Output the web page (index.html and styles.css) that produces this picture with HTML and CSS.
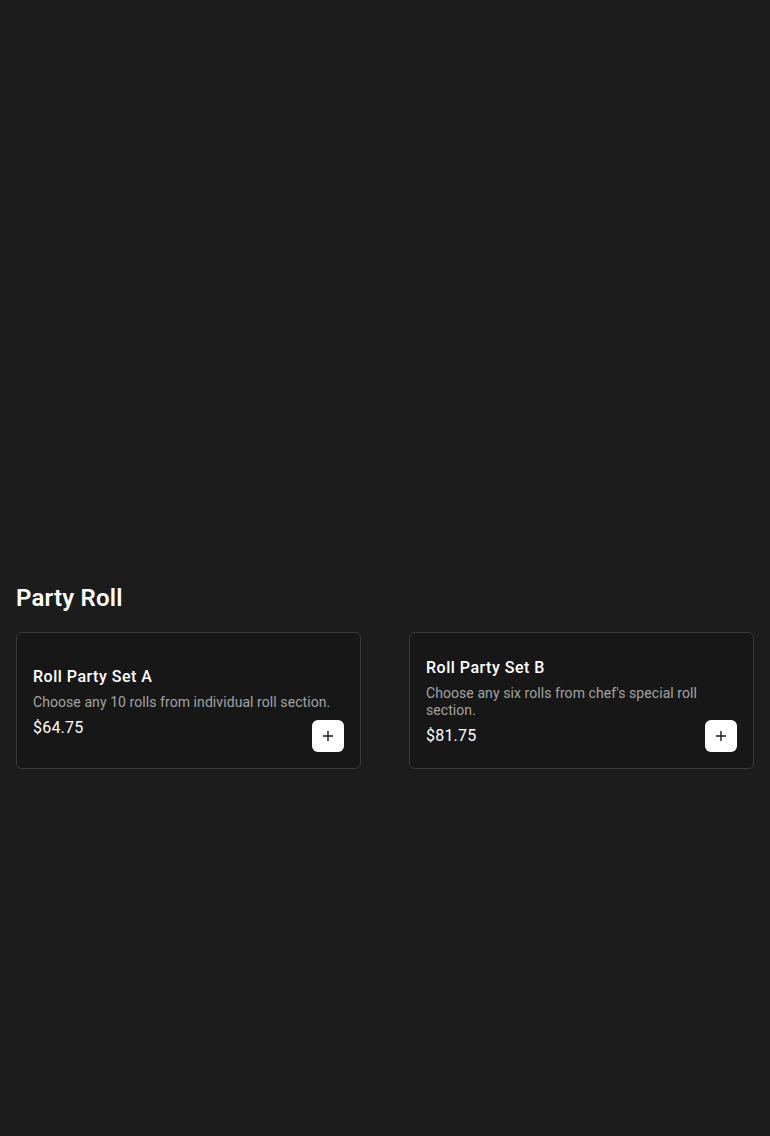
FILE: index.html
```html
<!DOCTYPE html>
<html lang="en">
<head>
<meta charset="utf-8">
<title>Party Roll</title>
<link rel="stylesheet" href="styles.css">
</head>
<body>
<main class="page">
  <div class="hero"></div>
  <section class="category">
    <h2 class="category-title">Party Roll</h2>
    <div class="grid">
      <article class="card">
        <div class="card-body">
          <h3 class="item-name">Roll Party Set A</h3>
          <p class="item-desc">Choose any 10 rolls from individual roll section.</p>
          <p class="item-price">$64.75</p>
        </div>
        <button class="add-btn" aria-label="Add">
          <svg width="12" height="12" viewBox="0 0 12 12"><path d="M6 1.5v9M1.5 6h9" stroke="#1c1c1c" stroke-width="1.4" fill="none" stroke-linecap="round"/></svg>
        </button>
      </article>
      <article class="card">
        <div class="card-body">
          <h3 class="item-name">Roll Party Set B</h3>
          <p class="item-desc">Choose any six rolls from chef's special roll section.</p>
          <p class="item-price">$81.75</p>
        </div>
        <button class="add-btn" aria-label="Add">
          <svg width="12" height="12" viewBox="0 0 12 12"><path d="M6 1.5v9M1.5 6h9" stroke="#1c1c1c" stroke-width="1.4" fill="none" stroke-linecap="round"/></svg>
        </button>
      </article>
    </div>
  </section>
</main>
</body>
</html>
```
FILE: styles.css
```css
* { box-sizing: border-box; }
html, body {
  margin: 0;
  background: #1c1c1c;
  color: #ffffff;
  font-family: Roboto, "Liberation Sans", sans-serif;
}
.page {
  padding: 0 16px;
  min-height: 1136px;
}
.hero {
  height: 582px;
}
.category-title {
  margin: 0 0 18px 0;
  font-size: 24px;
  line-height: 32px;
  font-weight: 600;
  letter-spacing: 0.2px;
}
.grid {
  display: grid;
  grid-template-columns: 1fr 1fr;
  column-gap: 48px;
}
.card {
  position: relative;
  min-height: 137px;
  background: #171717;
  border: 1px solid #3a3a3a;
  border-radius: 6px;
  padding: 16px;
  display: flex;
  align-items: center;
}
.card-body {
  display: flex;
  flex-direction: column;
  gap: 5px;
  padding-top: 3px;
}
.item-name {
  margin: 0;
  font-size: 16px;
  line-height: 24px;
  font-weight: 500;
  letter-spacing: 0.5px;
}
.item-desc {
  margin: 0;
  font-size: 14px;
  line-height: 17px;
  color: #a3a3a3;
  letter-spacing: 0.07px;
}
.item-price {
  margin: 0;
  font-size: 16px;
  line-height: 24px;
  font-weight: 400;
  letter-spacing: 0.2px;
}
.add-btn {
  position: absolute;
  right: 16px;
  bottom: 16px;
  width: 32px;
  height: 32px;
  border: none;
  border-radius: 6px;
  background: #ffffff;
  display: flex;
  align-items: center;
  justify-content: center;
  padding: 0;
  cursor: pointer;
}
```
